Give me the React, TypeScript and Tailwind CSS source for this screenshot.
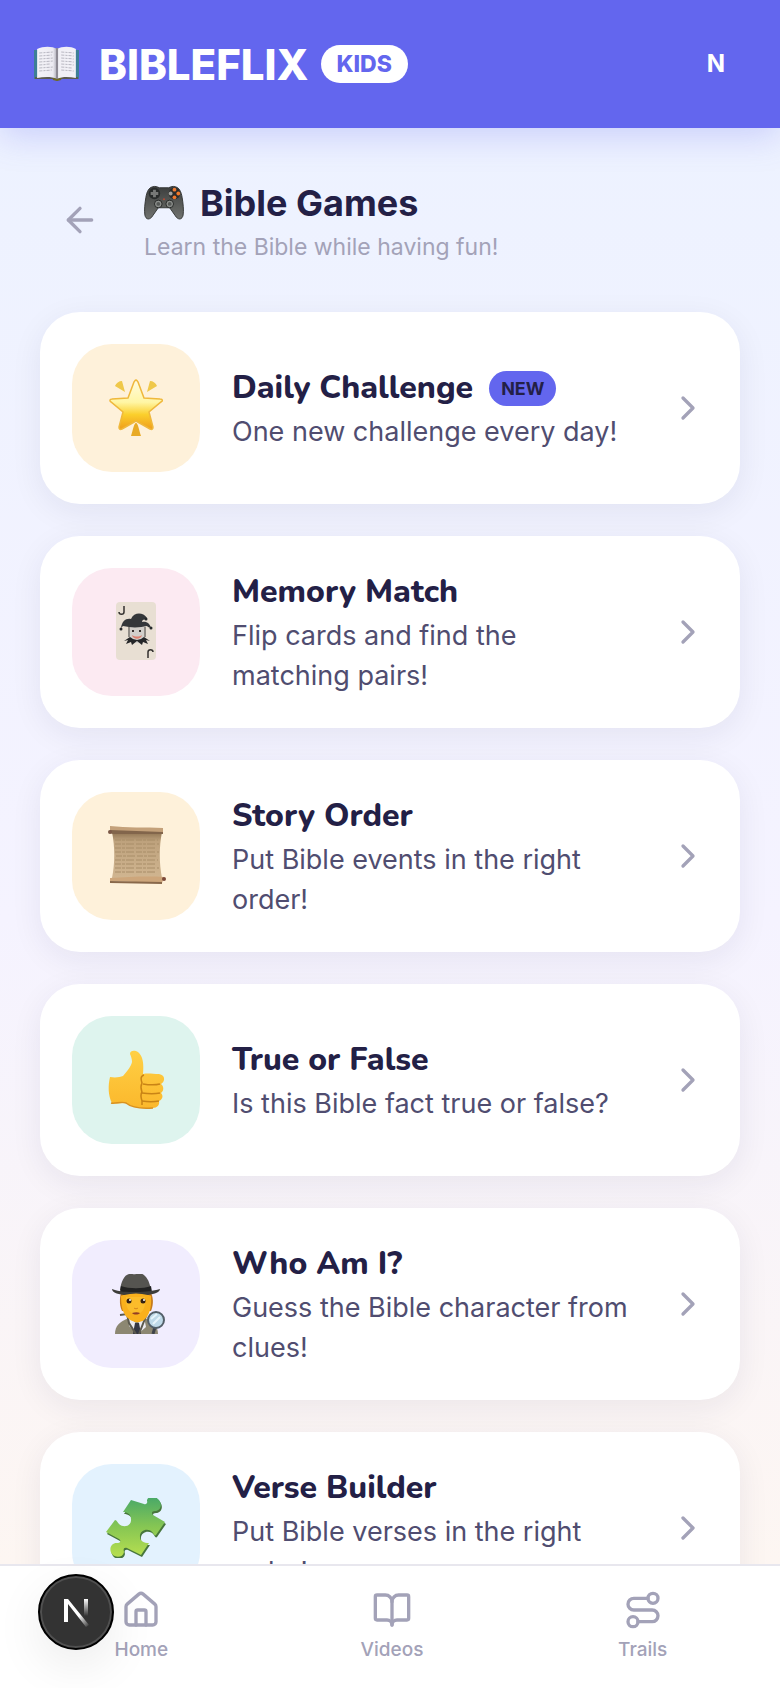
import type { ReactNode } from 'react';
import { ArrowLeft, BookOpen, ChevronRight, House, Route } from 'lucide-react';

interface Game {
  id: string;
  title: string;
  description: string;
  tile: string;
  art: ReactNode;
  isNew?: boolean;
}

function BookArt() {
  return (
    <svg viewBox="0 0 43 36" preserveAspectRatio="none" className="h-9 w-[45px]" aria-hidden="true">
      <defs>
        <linearGradient id="page" x1="0" x2="1" y1="0" y2="0">
          <stop offset="0" stopColor="#f4f3f8" />
          <stop offset="0.8" stopColor="#ecebf2" />
          <stop offset="1" stopColor="#aaa9b4" />
        </linearGradient>
      </defs>
      <path d="M0 4h43v29H25l-3 2-3-2H0z" fill="#3d7f96" />
      <path d="M1 31h41v2H25l-3 2-3-2H1z" fill="#5b5a50" />
      <path d="M3 3C9 0 17 0 22 3v30c-6-3-13-2-19-1z" fill="url(#page)" />
      <path d="M40 3C35 0 27 0 22 3v30c6-3 12-2 18-1z" fill="#f1f0f6" />
      <path d="M21 2h2v31h-2z" fill="#8d8a94" />
      <path
        d="M5 7l13-1M5 10l12-1M5 13l13-1M5 16l13-1M5 19l11-1M5 22l13-1M5 25l12-1M26 6l12 1M26 9l12 1M26 12l12 1M26 15l12 1M26 18l12 1M26 21l11 1M26 24l12 1"
        stroke="#b9b8c2"
        strokeWidth="1"
        strokeDasharray="3 1 2 1"
      />
      <path d="M18 32l4 1 4-1v2l-4 1-4-1z" fill="#716b25" />
    </svg>
  );
}

function GamepadArt() {
  return (
    <svg viewBox="0 0 42 36" className="h-9 w-10" aria-hidden="true">
      <defs>
        <linearGradient id="pad" x1="0" x2="0" y1="0" y2="1">
          <stop offset="0" stopColor="#3c3e3d" />
          <stop offset="1" stopColor="#70726f" />
        </linearGradient>
      </defs>
      <path
        d="M9 1c3-1 5 0 7 1h10c2-1 4-2 7-1 4 1 6 5 7 11 1 6 2 14 1 19-1 4-4 5-7 2l-7-10H15L8 33c-3 3-6 2-7-2-1-5 0-13 1-19C3 6 5 2 9 1z"
        fill="url(#pad)"
        stroke="#343635"
        strokeWidth="1"
      />
      <circle cx="11" cy="8" r="6" fill="#292c2b" />
      <path d="M11 4v8M7 8h8" stroke="#777977" strokeWidth="3" />
      <circle cx="32" cy="8" r="6" fill="#292c2b" />
      <circle cx="32" cy="4" r="2" fill="#ee7a31" />
      <circle cx="36" cy="8" r="2" fill="#f07a2c" />
      <circle cx="28" cy="8" r="2" fill="#a4a39e" />
      <circle cx="32" cy="12" r="2" fill="#ef762a" />
      <circle cx="15" cy="19" r="4" fill="#8d908d" stroke="#252726" />
      <circle cx="15" cy="19" r="2" fill="#555856" />
      <circle cx="27" cy="19" r="4" fill="#8d908d" stroke="#252726" />
      <circle cx="27" cy="19" r="2" fill="#555856" />
      <circle cx="21" cy="14" r="1" fill="#c04a32" />
    </svg>
  );
}

function StarArt() {
  return (
    <svg viewBox="0 0 60 60" className="size-[60px]" aria-hidden="true">
      <defs>
        <linearGradient id="star" x1="0" x2="0" y1="0" y2="1">
          <stop offset="0" stopColor="#fffbe0" />
          <stop offset="0.45" stopColor="#fff6a5" />
          <stop offset="0.7" stopColor="#fbcf2c" />
          <stop offset="1" stopColor="#ef9d1c" />
        </linearGradient>
      </defs>
      <path
        d="M30 2c1 0 1 1 2 2l6 16 16 1c3 0 3 2 1 3L43 34l4 15c0 2-1 3-3 2l-14-8-14 8c-2 1-3 0-3-2l4-15L5 24c-2-1-1-3 1-3l16-1 6-16c1-1 1-2 2-2z"
        fill="url(#star)"
        stroke="#efb83c"
        strokeWidth="1.5"
      />
      <path d="M9 8c1-3 4-5 7-5l3 11zM51 8c-1-3-4-5-7-5l-3 11z" fill="#efc84a" />
      <path d="M30 45c2 0 3 7 5 13H25c2-6 3-13 5-13z" fill="#e8aa25" />
    </svg>
  );
}

function JokerArt() {
  return (
    <svg viewBox="0 0 60 60" className="size-[60px]" aria-hidden="true">
      <rect x="10" y="0" width="40" height="58" rx="4" fill="#e8dfd3" />
      <path d="M18 4v6c0 3-5 3-5 0M42 56v-6c0-3 5-3 5 0" fill="none" stroke="#33312f" strokeWidth="1.5" />
      <path d="M24 25h14v9c0 5-4 7-7 7s-7-2-7-7z" fill="#d2cfca" />
      <path d="M26 33c3 2 7 2 10 0-1 5-9 5-10 0z" fill="#dc806f" />
      <path d="M27 28v2M34 28v2" stroke="#37302c" strokeWidth="2" />
      <path
        d="M15 26c1-7 5-10 10-9 3-7 12-7 16-1l-1 2c-2-1-4 0-4 2 5-1 8 2 9 6l-3-1-1-1c-5 1-11 2-18 1l-6-1z"
        fill="#34373a"
      />
      <path d="M23 25v10M39 25v10" fill="none" stroke="#383838" strokeWidth="1" />
      <path d="M24 35l-6 4 4-1-2 4 5-2 1 3 5-4 5 4 1-3 5 2-2-4 4 1-6-4-3 2-4 1-4-1z" fill="#252628" />
      <g fill="#25282b">
        <circle cx="15" cy="27" r="1.5" />
        <circle cx="40" cy="17" r="1.5" />
        <circle cx="45" cy="26" r="1.5" />
      </g>
    </svg>
  );
}

function ScrollArt() {
  return (
    <svg viewBox="0 0 60 60" className="size-[60px]" aria-hidden="true">
      <defs>
        <linearGradient id="paper" x1="0" x2="0" y1="0" y2="1">
          <stop offset="0" stopColor="#8f7352" />
          <stop offset="0.2" stopColor="#bea27d" />
          <stop offset="1" stopColor="#d0b590" />
        </linearGradient>
      </defs>
      <path d="M6 6h50c-3 15-3 31 0 46H6c3-15 3-31 0-46z" fill="url(#paper)" />
      <path
        d="M9 14h43M9 18h44M9 22h42M9 26h44M10 30h40M9 34h43M9 38h42M9 42h44M9 46h41"
        stroke="#a88d69"
        strokeWidth="1"
        strokeDasharray="6 1 3 1 8 2"
      />
      <path d="M4 0c17 2 35 1 53 2v5L4 5z" fill="#c4a17a" />
      <path d="M4 4l53 2v2L7 8l-4-1z" fill="#82654b" />
      <path d="M4 52c18-1 36-2 54-1l-2 6-52-2z" fill="#cda67b" />
      <path d="M4 55l52 1v2L4 57z" fill="#89684a" />
      <circle cx="4" cy="6" r="2" fill="#7b5846" />
      <circle cx="58" cy="53" r="2" fill="#7b4939" />
    </svg>
  );
}

function ThumbArt() {
  return (
    <svg viewBox="0 0 60 60" className="size-[60px]" aria-hidden="true">
      <defs>
        <linearGradient id="thumb" x1="0" x2="0" y1="0" y2="1">
          <stop offset="0" stopColor="#ffd045" />
          <stop offset="1" stopColor="#fbb82c" />
        </linearGradient>
      </defs>
      <path
        d="M4 27c6 1 10 0 13-1 4-5 8-9 9-14 0-3-1-6-2-8 0-4 5-4 8-2 5 4 6 12 5 22 5-1 10 0 16 0 7 1 6 8 2 10 3 2 3 7 0 9 3 3 1 7-2 8 1 4-2 7-6 7-10 1-20 0-27-5-5 0-9 1-14 0-4-7-4-18-2-26z"
        fill="url(#thumb)"
      />
      <path d="M38 25c-4 1-3 5-2 8-2 4-1 6 0 9-2 3-1 6 0 9v4" fill="none" stroke="#c98416" strokeWidth="1.5" />
      <path d="M37 34c6 1 13 1 17 0M36 43c7 1 13 1 18 0M36 51c6 1 12 1 17 0" fill="none" stroke="#c98416" strokeWidth="1.5" />
      <path d="M5 53c5 1 10-2 15 0 6 5 14 6 27 5" fill="none" stroke="#d99120" strokeWidth="1.5" />
    </svg>
  );
}

function DetectiveArt() {
  return (
    <svg viewBox="0 0 60 60" className="size-[60px]" aria-hidden="true">
      <path d="M15 19c-2 7-1 14 1 18h29c2-5 3-12 0-18z" fill="#c47a1c" />
      <path d="M9 60c0-8 4-12 14-16h16c8 4 13 8 13 16z" fill="#8c8772" />
      <path d="M23 43l8 7 7-7 2 10-8 7-9-8z" fill="#ececf0" />
      <path d="M29 49h4l2 11h-8z" fill="#353843" />
      <path d="M14 41l7-1 2 9 7 11M40 42l-7 18" fill="none" stroke="#5b594e" strokeWidth="2" />
      <path d="M15 22c8-4 22-4 30 0 1 12-2 20-7 24-4 3-10 3-15-1-6-4-8-12-8-23z" fill="#f9b01c" />
      <path d="M20 23h19c1 8-1 17-9 17s-11-9-10-17z" fill="#fdc73a" opacity="0.5" />
      <circle cx="23" cy="27" r="2.5" fill="#342013" />
      <circle cx="37" cy="27" r="2.5" fill="#342013" />
      <circle cx="24" cy="26" r="1" fill="#fff" />
      <circle cx="38" cy="26" r="1" fill="#fff" />
      <path d="M26 39c3-1 6-1 8 0-2 2-6 2-8 0z" fill="#933e25" />
      <path d="M28 34c1 1 3 1 4 0" fill="none" stroke="#d4861d" />
      <path d="M14 16c1-8 4-15 9-16 3-1 4 1 7 0 4-1 6-1 9 2 4 4 5 9 6 14z" fill="#555450" />
      <path d="M15 12c8 3 22 3 30 0l1 6H14z" fill="#222222" />
      <path d="M6 15c8 3 14 3 24 3s17-1 24-3c0 3-5 5-12 6-8-2-16-2-24 0-8-1-12-3-12-6z" fill="#3d3d3a" />
      <path d="M49 53l-2 7" stroke="#3e4349" strokeWidth="3" />
      <circle cx="50" cy="46" r="8" fill="#bfdae8" stroke="#535f68" strokeWidth="2" />
      <path d="M45 45l6-5M47 50l7-7" stroke="#e7f5fb" strokeWidth="2" />
    </svg>
  );
}

function PuzzleArt() {
  return (
    <svg viewBox="0 0 60 60" className="size-[60px]" aria-hidden="true">
      <defs>
        <linearGradient id="puzzle" x1="0" x2="0" y1="0" y2="1">
          <stop offset="0" stopColor="#48a868" />
          <stop offset="0.5" stopColor="#86c653" />
          <stop offset="1" stopColor="#b7df50" />
        </linearGradient>
        <path
          id="piece"
          d="M25 2l13 4c2 1 4-1 3-3 0-5 8-6 12-1 4 5 1 11-4 11-3 0-4 2-2 4l12 7-9 13c-1 1-2 0-3-2-4-6-14-3-13 4 0 4 4 6 9 6l-8 12-14-7c-3-1-4 1-3 4-1 6-9 6-12 2-4-6 0-12 6-11 3 0 3-3 1-4L0 34l9-12c1 0 2 1 3 3 5 6 14 3 13-4 0-5-4-7-8-7z"
        />
      </defs>
      <use href="#piece" x="1" y="2" fill="#47763c" />
      <use href="#piece" fill="url(#puzzle)" />
    </svg>
  );
}

const games: Game[] = [
  { id: 'daily', title: 'Daily Challenge', description: 'One new challenge every day!', tile: 'bg-[#fef1da]', art: <StarArt />, isNew: true },
  { id: 'memory', title: 'Memory Match', description: 'Flip cards and find the matching pairs!', tile: 'bg-[#fceaf2]', art: <JokerArt /> },
  { id: 'story', title: 'Story Order', description: 'Put Bible events in the right order!', tile: 'bg-[#fef1da]', art: <ScrollArt /> },
  { id: 'truth', title: 'True or False', description: 'Is this Bible fact true or false?', tile: 'bg-[#def4ee]', art: <ThumbArt /> },
  { id: 'who', title: 'Who Am I?', description: 'Guess the Bible character from clues!', tile: 'bg-[#f1edfe]', art: <DetectiveArt /> },
  { id: 'verse', title: 'Verse Builder', description: 'Put Bible verses in the right order!', tile: 'bg-[#e3f2fe]', art: <PuzzleArt /> },
];

const tabs = [
  { label: 'Home', icon: House },
  { label: 'Videos', icon: BookOpen },
  { label: 'Trails', icon: Route },
];

function GameCard({ game }: { game: Game }) {
  return (
    <a
      href={`#${game.id}`}
      className="flex items-center gap-8 rounded-[40px] bg-white p-8 shadow-[0_8px_32px_rgba(35,32,70,0.07)]"
    >
      <span className={`flex size-32 shrink-0 items-center justify-center rounded-[40px] ${game.tile}`}>{game.art}</span>
      <span className="min-w-0 flex-1">
        <span className="flex items-center gap-4">
          <span className="font-['Nunito',sans-serif] text-[32px] leading-[48px] font-extrabold text-[#232046]">
            {game.title}
          </span>
          {game.isNew && (
            <span className="rounded-full bg-[#6366ee] px-3 text-[18px] leading-[35px] font-bold text-[#232046]">NEW</span>
          )}
        </span>
        <span className="block text-[27px] leading-10 text-[#504d70]">{game.description}</span>
      </span>
      <ChevronRight size={40} className="shrink-0 text-[#a3a2b8]" />
    </a>
  );
}

export default function App() {
  return (
    <div className="flex h-screen flex-col overflow-hidden font-['Inter',sans-serif]">
      <header className="z-10 flex h-32 shrink-0 items-center justify-between bg-[#6366ee] pr-8 pl-[34px] text-white shadow-[0_8px_32px_rgba(99,102,241,0.25)]">
        <a href="#home" className="flex items-center">
          <BookArt />
          <span className="ml-5 text-[42px] font-extrabold">BIBLEFLIX</span>
          <span className="ml-3 rounded-full bg-white px-4 text-[23px] leading-[38px] font-extrabold text-[#6366ee]">KIDS</span>
        </a>
        <button type="button" className="size-16 text-[24px] font-bold">
          N
        </button>
      </header>

      <main className="flex-1 overflow-y-auto bg-linear-to-b from-[#edf2ff] via-[#f5f3ff] via-55% to-[#fdf6f2] px-10 pb-10 [scrollbar-width:none]">
        {/* Page heading */}
        <div className="flex items-center gap-6 py-12">
          <button type="button" aria-label="Back" className="flex size-20 items-center justify-center text-[#a3a2b8]">
            <ArrowLeft size={40} />
          </button>
          <div>
            <h1 className="flex items-center gap-4 text-[36px] leading-[54px] font-bold text-[#232046]">
              <GamepadArt />
              Bible Games
            </h1>
            <p className="text-[23px] leading-[34px] text-[#a3a2b8]">Learn the Bible while having fun!</p>
          </div>
        </div>

        <div className="flex flex-col gap-8">
          {games.map((game) => (
            <GameCard key={game.id} game={game} />
          ))}
        </div>
      </main>

      <nav className="z-10 flex h-[124px] shrink-0 border-t-2 border-[#e8e7ee] bg-white pr-3 pl-4">
        {tabs.map(({ label, icon: Icon }) => (
          <a
            key={label}
            href={`#${label.toLowerCase()}`}
            className="flex flex-1 flex-col items-center gap-1 pt-6 text-[19px] leading-8 font-medium text-[#a3a2b8]"
          >
            <Icon size={40} />
            {label}
          </a>
        ))}
      </nav>

      {/* Dev tools badge floats over the tab bar */}
      <button
        type="button"
        aria-label="Open dev tools"
        className="fixed bottom-[38px] left-[38px] z-20 flex size-[76px] items-center justify-center rounded-full border-2 border-black bg-[#333333] shadow-[inset_0_0_0_2px_#505050,0_16px_48px_rgba(0,0,0,0.08)]"
      >
        <svg viewBox="0 0 28 30" className="h-[30px] w-7" fill="none" aria-hidden="true">
          <defs>
            <linearGradient id="stem" x1="0" x2="0" y1="0" y2="1">
              <stop offset="0" stopColor="#fff" />
              <stop offset="1" stopColor="#fff" stopOpacity="0" />
            </linearGradient>
            <linearGradient id="slash" x1="0" x2="1" y1="0" y2="1">
              <stop offset="0.6" stopColor="#fff" />
              <stop offset="1" stopColor="#fff" stopOpacity="0" />
            </linearGradient>
          </defs>
          <path d="M2 25V2h4l21 26-3 2L6 7v18z" fill="url(#slash)" />
          <path d="M22 2h4v17h-4z" fill="url(#stem)" />
        </svg>
      </button>
    </div>
  );
}
